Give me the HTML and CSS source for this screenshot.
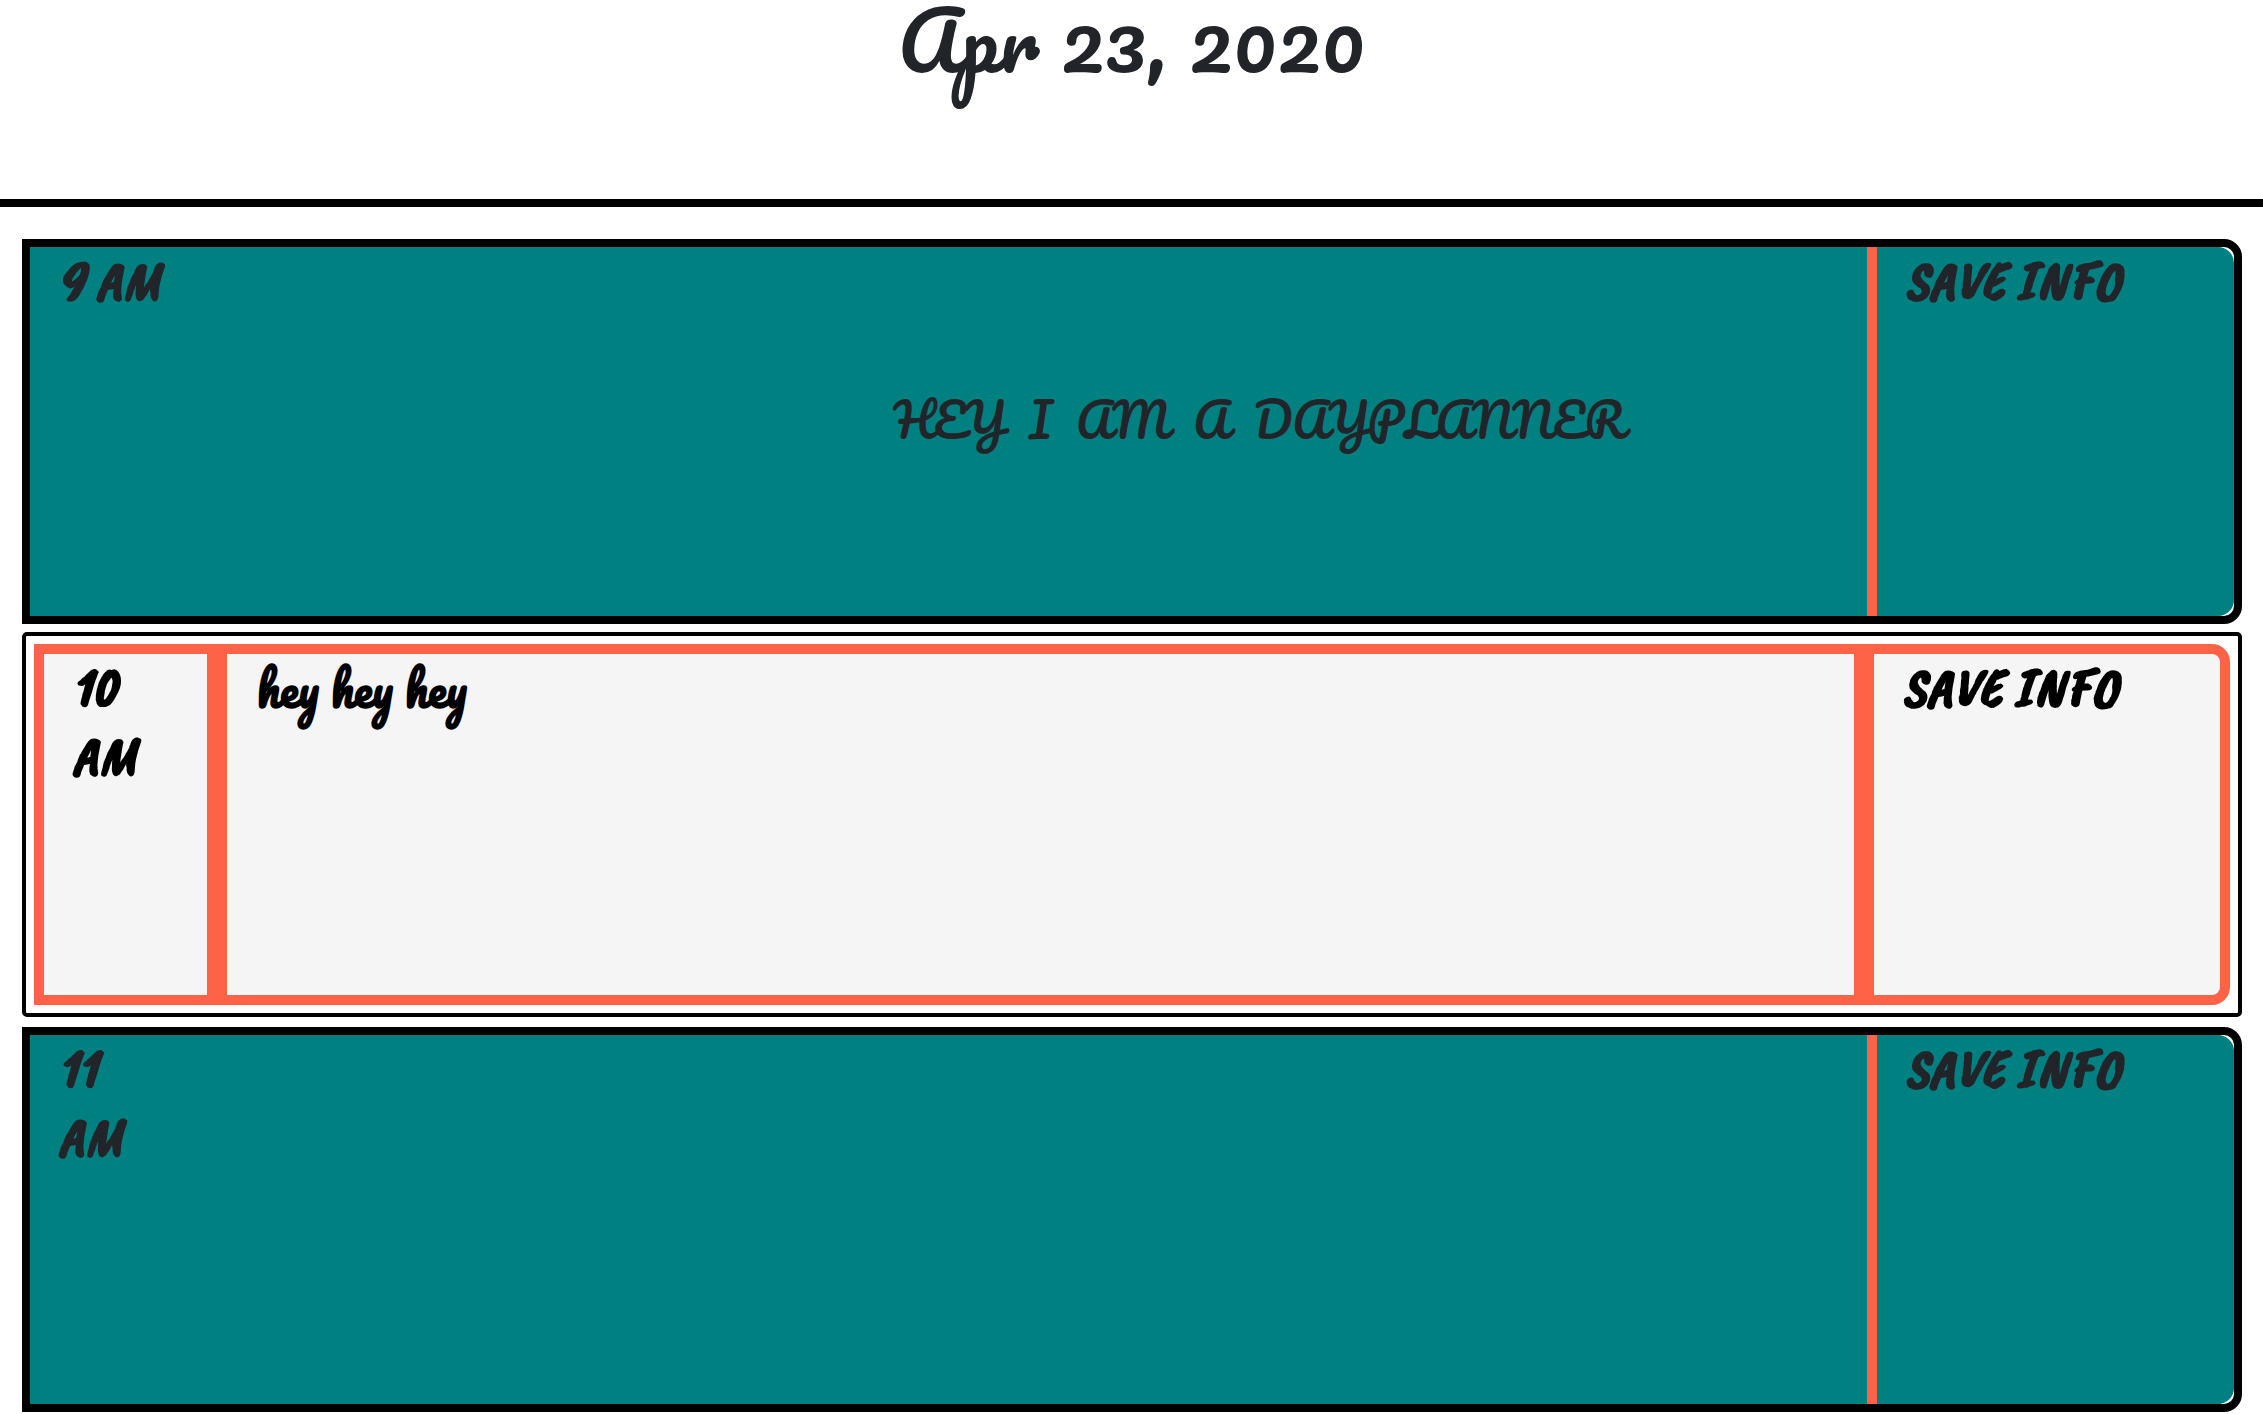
FILE: index.html
```html
<!DOCTYPE html>
<html lang="en">
<head>
  <meta charset="utf-8">
  <meta name="viewport" content="width=device-width, initial-scale=1">
  <title>Day Planner</title>
  <link rel="stylesheet" href="styles.css">
</head>
<body>
  <header class="page-header">
    <h1 class="date">Apr 23, 2020</h1>
  </header>
  <main class="planner">
    <section class="slot">
      <h2 class="hour">9 AM</h2>
      <p class="greeting">HEY  I  AM  A  DAYPLANNER</p>
      <button class="save" type="button">SAVE INFO</button>
    </section>
    <section class="slot slot-current">
      <h2 class="hour"><label for="note-10">10<br>AM</label></h2>
      <textarea class="note" id="note-10">hey hey hey</textarea>
      <button class="save" type="button">SAVE INFO</button>
    </section>
    <section class="slot">
      <h2 class="hour"><label for="note-11">11<br>AM</label></h2>
      <textarea class="note" id="note-11"></textarea>
      <button class="save" type="button">SAVE INFO</button>
    </section>
  </main>
</body>
</html>
```
FILE: styles.css
```css
* {
  box-sizing: border-box;
}

body {
  margin: 0;
  background: #fff;
  color: #212529;
}

.page-header {
  padding-bottom: 121px;
  border-bottom: 8px solid #000;
  text-align: center;
}

.date {
  margin: 0;
  font: 400 80px/78px Pacifico, Lato, cursive;
}

.planner {
  display: flex;
  flex-direction: column;
  gap: 8px;
  padding: 32px 21px 2px 22px;
}

.slot {
  display: grid;
  grid-template-columns: 1fr 9fr 2fr;
  min-height: 385px;
  border: 8px solid #000;
  border-radius: 0 18px 18px 0;
}

.hour,
.greeting,
.note,
.save {
  min-width: 0;
  margin: 0;
  border: 0 solid tomato;
  border-radius: 0;
  background: teal;
  color: inherit;
}

.hour,
.save {
  padding: 0 28px;
  font: italic 700 56px/68px "Permanent Marker", "Caveat Brush", Lato, cursive;
  text-align: left;
  white-space: nowrap;
}

.save {
  display: flex;
  align-items: flex-start;
  border-left-width: 10px;
  border-radius: 0 16px 16px 0;
}

.greeting {
  padding: 138px 0 0 680px;
  font: 400 46px/69px Pacifico, Lato, cursive;
  white-space: pre;
}

.note {
  padding: 0 30px;
  resize: none;
  outline: 0;
  font: 700 46px/69px Pacifico, Lato, cursive;
}

.slot-current {
  margin-bottom: 2px;
  padding: 8px;
  border-width: 4px;
  border-radius: 5px;
  color: #000;
}

.slot-current .hour,
.slot-current .note,
.slot-current .save {
  border-width: 10px;
  background: whitesmoke;
}

.slot-current .save {
  border-radius: 0 18px 18px 0;
}
```
